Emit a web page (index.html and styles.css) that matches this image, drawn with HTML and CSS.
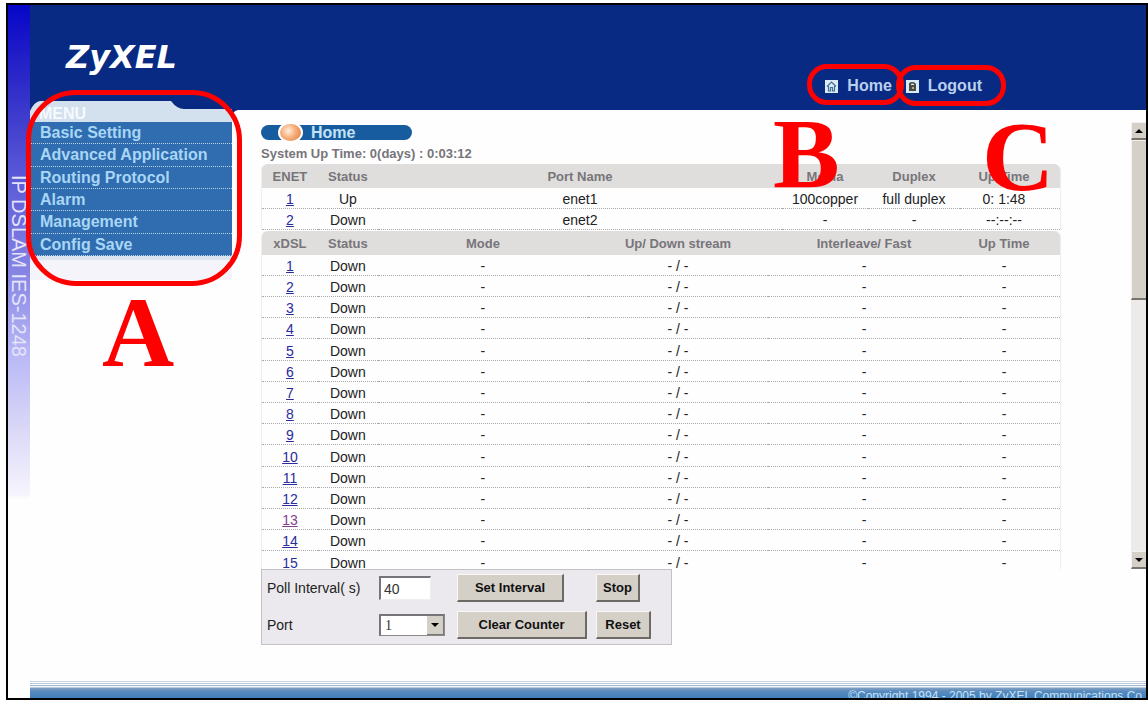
FILE: index.html
```html
<!DOCTYPE html>
<html lang="en">
<head>
    <meta charset="UTF-8">
    <meta name="viewport" content="width=device-width, initial-scale=1.0">
    <title>IP DSLAM IES-1248</title>
    <link rel="stylesheet" href="styles.css">
</head>
<body>

<div class="frame">
    <!-- Vertical product name -->
    <div class="rail"><span>IP DSLAM IES-1248</span></div>

    <div class="page">
        <header class="header">
            <div class="logo">ZyXEL</div>
            <nav class="links">
                <a href="#">
                    <svg width="13" height="13" viewBox="0 0 13 13"><rect width="13" height="13" fill="#d8ecf8"/><path d="M2 6.5L6.5 2L11 6.5M3.5 6V11H5.5V7.5H7.5V11H9.5V6" fill="none" stroke="#45708f" stroke-width="1.2"/></svg>
                    Home
                </a>
                <a href="#">
                    <svg width="13" height="13" viewBox="0 0 13 13"><rect width="13" height="13" fill="#d8ecf8"/><path d="M3 11V4Q3 2 6 2Q10 2 10 5V11Z" fill="#4c4a44"/><path d="M5 5V4Q6 3 8 4V5Z" fill="#d8ecf8"/><rect x="6" y="7" width="2" height="2" fill="#b5a878"/></svg>
                    Logout
                </a>
            </nav>
        </header>

        <div class="main">
            <aside class="sidebar">
                <div class="menuTab">
                    <svg width="208" height="21" viewBox="0 0 208 21"><path d="M0 0H208V9Q203 10 202 15V21H0Z" fill="#082a83"/><path d="M0 21V10Q4 1 10 0H141Q147 8 154 8H202V21Z" fill="#d3e0ee"/></svg>
                    <span>MENU</span>
                </div>
                <ul class="menu">
                    <li><a href="#">Basic Setting</a></li>
                    <li><a href="#">Advanced Application</a></li>
                    <li><a href="#">Routing Protocol</a></li>
                    <li><a href="#">Alarm</a></li>
                    <li><a href="#">Management</a></li>
                    <li><a href="#">Config Save</a></li>
                </ul>
                <div class="menuEnd"></div>
            </aside>

            <main class="content">
                <div class="scrollArea">
                    <div class="status">
                        <h1 class="title"><span class="ball"></span>Home</h1>
                        <p class="upTime">System Up Time: 0(days) : 0:03:12</p>

                        <!-- Ethernet ports -->
                        <table class="ports">
                            <thead>
                                <tr><th class="colPort">ENET</th><th class="colStatus">Status</th><th>Port Name</th><th class="colMedia">Media</th><th class="colDuplex">Duplex</th><th class="colTime">Up Time</th></tr>
                            </thead>
                            <tbody>
                                <tr><td><a href="#">1</a></td><td>Up</td><td>enet1</td><td>100copper</td><td>full duplex</td><td>0: 1:48</td></tr>
                                <tr><td><a href="#">2</a></td><td>Down</td><td>enet2</td><td>-</td><td>-</td><td>--:--:--</td></tr>
                            </tbody>
                        </table>

                        <!-- DSL ports -->
                        <table class="ports dsl">
                            <thead>
                                <tr><th class="colPort">xDSL</th><th class="colStatus">Status</th><th>Mode</th><th class="colStream">Up/ Down stream</th><th class="colFast">Interleave/ Fast</th><th class="colTime">Up Time</th></tr>
                            </thead>
                            <tbody>
                                <tr><td><a href="#">1</a></td><td>Down</td><td>-</td><td>- / -</td><td>-</td><td>-</td></tr>
                                <tr><td><a href="#">2</a></td><td>Down</td><td>-</td><td>- / -</td><td>-</td><td>-</td></tr>
                                <tr><td><a href="#">3</a></td><td>Down</td><td>-</td><td>- / -</td><td>-</td><td>-</td></tr>
                                <tr><td><a href="#">4</a></td><td>Down</td><td>-</td><td>- / -</td><td>-</td><td>-</td></tr>
                                <tr><td><a href="#">5</a></td><td>Down</td><td>-</td><td>- / -</td><td>-</td><td>-</td></tr>
                                <tr><td><a href="#">6</a></td><td>Down</td><td>-</td><td>- / -</td><td>-</td><td>-</td></tr>
                                <tr><td><a href="#">7</a></td><td>Down</td><td>-</td><td>- / -</td><td>-</td><td>-</td></tr>
                                <tr><td><a href="#">8</a></td><td>Down</td><td>-</td><td>- / -</td><td>-</td><td>-</td></tr>
                                <tr><td><a href="#">9</a></td><td>Down</td><td>-</td><td>- / -</td><td>-</td><td>-</td></tr>
                                <tr><td><a href="#">10</a></td><td>Down</td><td>-</td><td>- / -</td><td>-</td><td>-</td></tr>
                                <tr><td><a href="#">11</a></td><td>Down</td><td>-</td><td>- / -</td><td>-</td><td>-</td></tr>
                                <tr><td><a href="#">12</a></td><td>Down</td><td>-</td><td>- / -</td><td>-</td><td>-</td></tr>
                                <tr><td><a href="#" class="visited">13</a></td><td>Down</td><td>-</td><td>- / -</td><td>-</td><td>-</td></tr>
                                <tr><td><a href="#">14</a></td><td>Down</td><td>-</td><td>- / -</td><td>-</td><td>-</td></tr>
                                <tr><td><a href="#">15</a></td><td>Down</td><td>-</td><td>- / -</td><td>-</td><td>-</td></tr>
                            </tbody>
                        </table>
                    </div>

                    <div class="scrollbar">
                        <button type="button" class="arrow" aria-label="Scroll up"><svg width="8" height="4" viewBox="0 0 8 4"><path d="M0 4L4 0L8 4Z"/></svg></button>
                        <div class="thumb"></div>
                        <button type="button" class="arrow arrowDown" aria-label="Scroll down"><svg width="8" height="4" viewBox="0 0 8 4"><path d="M0 0L4 4L8 0Z"/></svg></button>
                    </div>
                </div>

                <form class="controls">
                    <label for="interval">Poll Interval( s)</label>
                    <input type="text" id="interval" value="40">
                    <button type="button" class="wide">Set Interval</button>
                    <button type="button">Stop</button>

                    <label for="port">Port</label>
                    <div class="selectBox">
                        <select id="port"><option>1</option><option>2</option></select>
                        <span class="drop"><svg width="8" height="4" viewBox="0 0 8 4"><path d="M0 0L4 4L8 0Z"/></svg></span>
                    </div>
                    <button type="button" class="wider">Clear Counter</button>
                    <button type="button" class="reset">Reset</button>
                </form>
            </main>
        </div>

        <footer class="footer">©Copyright 1994 - 2005 by ZyXEL Communications Co</footer>
    </div>
</div>

<!-- Callouts over the page -->
<div class="ring ringA"></div>
<div class="ring ringB"></div>
<div class="ring ringC"></div>
<div class="letter letterA">A</div>
<div class="letter letterB">B</div>
<div class="letter letterC">C</div>

</body>
</html>
```
FILE: styles.css
```css
* {
    box-sizing: border-box;
}

body {
    position: relative;
    margin: 0;
    padding: 3px 0 1px 6px;
    min-height: 100vh;
    display: flex;
    font-family: "Liberation Sans", Arial, sans-serif;
    font-size: 14px;
    color: #222;
    background-color: #fff;
}

.frame {
    flex: 1;
    display: flex;
    border: 2px solid #000;
    background-color: #fefefe;
}

/* Left rail */
.rail {
    width: 22px;
    padding-top: 170px;
    background: linear-gradient(#0606c8 0, #2a27c8 70px, #5a58d6 170px, #8886e4 270px, #b9b8f6 350px, #d8d6f6 420px, #f6f5fd 490px, #fefefe 494px);
    color: #e4e4fb;
    font-size: 20px;
    line-height: 22px;
}

.rail span {
    writing-mode: vertical-rl;
    white-space: nowrap;
}

.page {
    flex: 1;
    min-width: 0;
    display: flex;
    flex-direction: column;
}

/* Header */
.header {
    height: 105px;
    display: flex;
    justify-content: space-between;
    background-color: #082a83;
}

.logo {
    padding: 30px 0 0 36px;
    font-family: "DejaVu Sans", Verdana, sans-serif;
    font-size: 32px;
    font-style: italic;
    font-weight: bold;
    line-height: 44px;
    color: #fff;
}

.links {
    display: flex;
    gap: 14px;
    padding: 71px 164px 0 0;
}

.links a {
    display: flex;
    align-items: center;
    gap: 9px;
    height: 20px;
    color: #bcd0ee;
    font-size: 16px;
    font-weight: bold;
    text-decoration: none;
}

/* Menu */
.main {
    flex: 1;
    display: flex;
}

.sidebar {
    width: 203px;
    margin-top: -9px;
}

.menuTab {
    position: relative;
    height: 21px;
}

.menuTab svg {
    display: block;
    overflow: visible;
}

.menuTab span {
    position: absolute;
    left: 9px;
    top: 4px;
    color: #f6fafd;
    font-size: 16px;
    font-weight: bold;
    line-height: 18px;
}

.menu {
    display: flex;
    flex-direction: column;
    width: 202px;
    height: 134px;
    margin: 0;
    padding: 0;
    list-style-type: none;
    background-color: #2f6db0;
}

.menu li {
    flex: 1;
    border-bottom: 1px dotted #b9d3ea;
}

.menu a {
    display: block;
    padding-left: 10px;
    color: #a9d6f5;
    font-size: 16px;
    font-weight: bold;
    line-height: 21px;
    text-decoration: none;
}

.menuEnd {
    width: 202px;
    height: 24px;
    border-top: 4px solid #dbe5f0;
    background-color: #f5f4fa;
}

/* Content */
.content {
    flex: 1;
    min-width: 0;
    padding-top: 12px;
}

.scrollArea {
    display: flex;
    height: 447px;
    overflow: hidden;
}

.status {
    flex: 1;
    padding: 3px 70px 0 28px;
}

.title {
    display: flex;
    align-items: center;
    gap: 8px;
    width: 151px;
    height: 15px;
    margin: 0;
    padding-left: 17px;
    border-radius: 8px;
    background-color: #175c9f;
    color: #c3e2f6;
    font-size: 16px;
    line-height: 15px;
}

.ball {
    flex: none;
    width: 25px;
    height: 21px;
    border: 2px solid #fff;
    border-radius: 50%;
    background: radial-gradient(circle at 40% 40%, #fff0e2 0, #f6ae78 45%, #dd763a 100%);
}

.upTime {
    margin: 4px 0 1px;
    color: #77757a;
    font-size: 13px;
    font-weight: bold;
    line-height: 19px;
}

.ports {
    width: 100%;
    table-layout: fixed;
    border-collapse: separate;
    border-spacing: 0;
    border-left: 1px solid #ededee;
    border-right: 1px solid #ededee;
    border-radius: 6px 6px 0 0;
    text-align: center;
}

.dsl {
    margin-top: 1px;
}

.ports th {
    height: 24px;
    padding: 0;
    background-color: #e0dedd;
    color: #77757a;
    font-size: 13px;
}

.ports th:first-child {
    border-top-left-radius: 6px;
}

.ports th:last-child {
    border-top-right-radius: 6px;
}

.ports td {
    height: 21px;
    padding: 2px 0 0;
    border-bottom: 1px dotted #aaa;
    line-height: 18px;
    white-space: nowrap;
}

.ports tr:nth-child(5n) td {
    height: 22px;
}

.ports a {
    color: #2b2b9c;
}

.ports a.visited {
    color: #84408e;
}

.colPort {
    width: 7%;
}

.colStatus {
    width: 60px;
}

.colMedia {
    width: 86px;
}

.colDuplex {
    width: 92px;
}

.colStream {
    width: 180px;
}

.colFast {
    width: 192px;
}

.colTime {
    width: 100px;
}

.ports th:last-child,
.ports td:last-child {
    padding-right: 12px;
}

/* Scrollbar */
.scrollbar {
    display: flex;
    flex-direction: column;
    width: 15px;
    background-color: #edebe9;
}

.scrollbar .arrow,
.thumb {
    border: 1px solid #f4f2ee;
    border-right: none;
    border-bottom: 2px solid #77736d;
    background-color: #d4d0c8;
}

.scrollbar .arrow {
    display: flex;
    align-items: center;
    justify-content: center;
    height: 18px;
    padding: 0;
}

.thumb {
    height: 160px;
}

.scrollbar .arrowDown {
    margin-top: auto;
}

/* Poll and port controls */
.controls {
    display: grid;
    grid-template-columns: 112px 78px 139px auto;
    grid-template-rows: 28px 28px;
    row-gap: 9px;
    align-items: center;
    justify-items: start;
    width: 411px;
    height: 76px;
    margin-left: 28px;
    padding: 4px 5px;
    border: 1px solid #c2c1c6;
    background-color: #ebe9ed;
}

.controls input {
    width: 52px;
    height: 24px;
    padding: 0 3px;
    border: 1px solid #eee;
    border-top: 2px solid #77757a;
    border-left: 2px solid #77757a;
    background-color: #fff;
    color: #333;
    font-family: inherit;
    font-size: 14px;
}

.controls button {
    height: 28px;
    padding: 0 6px;
    border: 1px solid #faf9f6;
    border-right: 2px solid #6d6a66;
    border-bottom: 2px solid #6d6a66;
    background-color: #d4d0c8;
    color: #111;
    font-family: inherit;
    font-size: 13px;
    font-weight: bold;
}

.controls .wide {
    width: 107px;
}

.controls .wider {
    width: 130px;
}

.controls .reset {
    width: 55px;
}

.selectBox {
    display: flex;
    width: 66px;
    height: 22px;
    border: 1px solid #8d8a88;
    border-top: 2px solid #77757a;
    border-left: 2px solid #77757a;
    background-color: #fff;
}

.selectBox select {
    flex: 1;
    min-width: 0;
    padding: 0 4px;
    border: none;
    appearance: none;
    background-color: #fff;
    color: #333;
    font-family: "Liberation Serif", serif;
    font-size: 14px;
}

.drop {
    display: flex;
    align-items: center;
    justify-content: center;
    width: 17px;
    border-right: 1px solid #77757a;
    border-bottom: 1px solid #77757a;
    background-color: #d4d0c8;
}

/* Footer */
.footer {
    height: 17px;
    padding: 8px 4px 0 0;
    overflow: hidden;
    background: linear-gradient(#c9d6e4 0, #c9d6e4 1px, #fff 1px, #fff 2px, #b9c9da 2px, #b9c9da 3px, #fff 3px, #fff 4px, #9fb6ce 4px, #9fb6ce 5px, #f4f7fa 5px, #f4f7fa 6px, #7f9fc0 7px, #5b8bbd 10px, #3f80bd 17px);
    color: #c5e0f5;
    font-size: 12px;
    line-height: 15px;
    text-align: right;
}

/* Callouts */
.ring {
    position: absolute;
    border: 5px solid #f00;
    border-radius: 20px;
    pointer-events: none;
}

.ringA {
    left: 26px;
    top: 90px;
    width: 216px;
    height: 196px;
    border-radius: 50px;
}

.ringB {
    left: 807px;
    top: 64px;
    width: 97px;
    height: 41px;
}

.ringC {
    left: 896px;
    top: 65px;
    width: 110px;
    height: 41px;
}

.letter {
    position: absolute;
    color: #f00;
    font-family: "Liberation Serif", "Times New Roman", serif;
    font-size: 100px;
    font-weight: bold;
    line-height: 100px;
    pointer-events: none;
}

.letterA {
    left: 102px;
    top: 283px;
}

.letterB {
    left: 773px;
    top: 104px;
}

.letterC {
    left: 982px;
    top: 107px;
}
```
